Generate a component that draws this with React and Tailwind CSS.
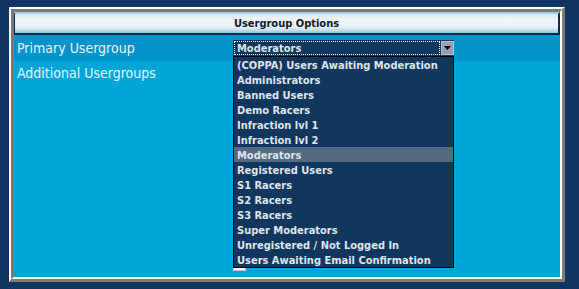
const groups = [
  "(COPPA) Users Awaiting Moderation",
  "Administrators",
  "Banned Users",
  "Demo Racers",
  "Infraction lvl 1",
  "Infraction lvl 2",
  "Moderators",
  "Registered Users",
  "S1 Racers",
  "S2 Racers",
  "S3 Racers",
  "Super Moderators",
  "Unregistered / Not Logged In",
  "Users Awaiting Email Confirmation",
];

const selected = "Moderators";

function App() {
  return (
    <div className="w-[579px] h-[289px] bg-[#0f3560] pt-[7px] pl-[9px] font-['DejaVu_Sans_Condensed','DejaVu_Sans',sans-serif]">
      <div className="w-[556px] h-[275px] border-t-2 border-l-2 border-t-white border-l-white border-r-[3px] border-b-[3px] border-r-[#7a7a7a] border-b-[#7a7a7a]">
        <div className="relative h-full flex flex-col border-t-[3px] border-l-[3px] border-t-[#7a7a7a] border-l-[#7a7a7a] border-r-2 border-b-2 border-r-white border-b-white bg-[#00a5d8]">
          {/* header */}
          <div className="h-[23px] pt-[2px] flex items-center justify-center border-l border-r-2 border-b-2 border-[#0b2c44] border-t-2 border-t-[#9fcfe2] bg-[linear-gradient(to_bottom,#dcebf2_0%,#f0f4f7_35%,#e8eff3_70%,#bcdbe7_88%,#86bdd3_100%)] text-[11px] font-bold text-[#0a1a2a]">
            Usergroup Options
          </div>

          {/* primary row */}
          <div className="h-[26px] flex items-center bg-[#0094c9] pl-[3px]">
            <span className="w-[216px] text-[14px] leading-[17px] text-[#e6f3fb]">Primary Usergroup</span>
            <div className="w-[221px] h-[16px] flex items-center bg-[#12375e] pl-px">
              <span className="flex-1 h-[14px] flex items-center pl-[3px] pt-[2px] outline-1 outline-dotted outline-white -outline-offset-1 text-[11px] font-bold text-[#dfe5ec]">
                {selected}
              </span>
              <span className="w-[13px] h-[14px] ml-px flex items-center justify-center bg-[#8ea2ba] border border-[#b5c3d3]">
                <svg width="7" height="4" viewBox="0 0 7 4">
                  <path d="M0 0h7L3.5 4z" fill="#000" />
                </svg>
              </span>
            </div>
          </div>

          {/* additional row */}
          <div className="flex-1 flex pl-[3px] pt-[4px]">
            <span className="w-[216px] text-[14px] leading-[17px] text-[#e6f3fb]">Additional Usergroups</span>
            <div className="pt-[193px]">
              <div className="w-[13px] h-[13px] bg-white border border-[#c8c8c8]" />
            </div>
          </div>

          {/* open select list */}
          <ul className="absolute left-[219px] top-[44px] w-[221px] bg-[#12375e] border border-black">
            {groups.map((g) => (
              <li
                key={g}
                className={`h-[15px] leading-[17px] pl-[3px] text-[11px] font-bold text-[#dfe5ec] whitespace-nowrap overflow-hidden ${
                  g === selected ? "bg-[#536a82]" : ""
                }`}
              >
                {g}
              </li>
            ))}
          </ul>
        </div>
      </div>
    </div>
  );
}

export default App;
